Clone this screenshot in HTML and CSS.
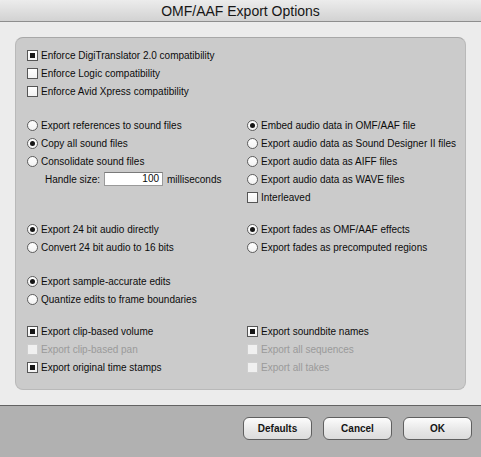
FILE: index.html
```html
<!DOCTYPE html>
<html>
<head>
<meta charset="utf-8">
<link rel="stylesheet" href="styles.css">
</head>
<body>
<div class="titlebar">OMF/AAF Export Options</div>
<div class="content">
  <div class="panel">
    <div class="group">
      <div class="row"><span class="cb on"></span>Enforce DigiTranslator 2.0 compatibility</div>
      <div class="row"><span class="cb"></span>Enforce Logic compatibility</div>
      <div class="row"><span class="cb"></span>Enforce Avid Xpress compatibility</div>
    </div>
    <div class="group grid g16">
      <div class="col">
        <div class="row"><span class="rb"></span>Export references to sound files</div>
        <div class="row"><span class="rb on"></span>Copy all sound files</div>
        <div class="row"><span class="rb"></span>Consolidate sound files</div>
        <div class="row handle">Handle size:<span class="field">100</span><span class="unit">milliseconds</span></div>
      </div>
      <div class="col">
        <div class="row"><span class="rb on"></span>Embed audio data in OMF/AAF file</div>
        <div class="row"><span class="rb"></span>Export audio data as Sound Designer II files</div>
        <div class="row"><span class="rb"></span>Export audio data as AIFF files</div>
        <div class="row"><span class="rb"></span>Export audio data as WAVE files</div>
        <div class="row"><span class="cb"></span>Interleaved</div>
      </div>
    </div>
    <div class="group grid g14">
      <div class="col">
        <div class="row"><span class="rb on"></span>Export 24 bit audio directly</div>
        <div class="row"><span class="rb"></span>Convert 24 bit audio to 16 bits</div>
      </div>
      <div class="col">
        <div class="row"><span class="rb on"></span>Export fades as OMF/AAF effects</div>
        <div class="row"><span class="rb"></span>Export fades as precomputed regions</div>
      </div>
    </div>
    <div class="group g16">
      <div class="row"><span class="rb on"></span>Export sample-accurate edits</div>
      <div class="row"><span class="rb"></span>Quantize edits to frame boundaries</div>
    </div>
    <div class="group grid g14">
      <div class="col">
        <div class="row"><span class="cb on"></span>Export clip-based volume</div>
        <div class="row dis"><span class="cb"></span>Export clip-based pan</div>
        <div class="row"><span class="cb on"></span>Export original time stamps</div>
      </div>
      <div class="col">
        <div class="row"><span class="cb on"></span>Export soundbite names</div>
        <div class="row dis"><span class="cb"></span>Export all sequences</div>
        <div class="row dis"><span class="cb"></span>Export all takes</div>
      </div>
    </div>
  </div>
</div>
<div class="bottombar">
  <button class="btn">Defaults</button>
  <button class="btn">Cancel</button>
  <button class="btn">OK</button>
</div>
</body>
</html>
```
FILE: styles.css
```css
html {
  background: #ececec;
}
body {
  margin: 0;
  width: 481px;
  height: 457px;
  overflow: hidden;
  display: flex;
  flex-direction: column;
  font-family: "Liberation Sans", Arial, sans-serif;
  font-size: 10px;
  color: #0c0c0c;
  background: #ececec;
}
.titlebar {
  height: 21px;
  flex: none;
  border-bottom: 1px solid #8e8e8e;
  background: linear-gradient(#ececec, #d2d2d2);
  display: flex;
  align-items: center;
  justify-content: center;
  font-size: 14px;
  color: #161616;
  border-radius: 4px 4px 0 0;
}
.content {
  flex: 1;
  padding: 15px;
  min-height: 0;
}
.panel {
  box-sizing: border-box;
  height: 100%;
  background: #cbcbcb;
  border: 1px solid #b9b9b9;
  border-top-color: #a8a8a8;
  border-radius: 8px;
  padding: 8px 0 0 11px;
}
.grid {
  display: grid;
  grid-template-columns: 220px 1fr;
}
.g16 { margin-top: 16px; }
.g14 { margin-top: 14px; }
.row {
  height: 18px;
  display: flex;
  align-items: center;
  white-space: nowrap;
}
.row.dis { color: #9a9a9a; }
.cb, .rb {
  flex: none;
  width: 11px;
  height: 11px;
  box-sizing: border-box;
  border: 1px solid #565656;
  background: linear-gradient(#ffffff, #f2f2f2);
  margin-right: 3px;
  display: flex;
  align-items: center;
  justify-content: center;
}
.rb {
  border-radius: 50%;
  border-color: #5e5e5e;
}
.dis .cb {
  border-color: #cfcfcf;
  background: #f0f0f0;
}
.cb.on::after {
  content: "";
  width: 5px;
  height: 5px;
  background: #151515;
}
.rb.on::after {
  content: "";
  width: 5px;
  height: 5px;
  border-radius: 50%;
  background: #151515;
}
.handle {
  padding-left: 18px;
}
.field {
  box-sizing: border-box;
  width: 59px;
  height: 14px;
  margin-left: 4px;
  border: 1px solid #9a9a9a;
  border-top-color: #7a7a7a;
  background: #fff;
  text-align: right;
  padding-right: 3px;
  line-height: 12px;
}
.unit {
  margin-left: 4px;
}
.bottombar {
  flex: none;
  height: 40px;
  border-top: 1px solid #636363;
  background: #b1b1b1;
  display: flex;
  justify-content: flex-end;
  align-items: flex-start;
  gap: 11px;
  padding: 11px 9px 0 0;
  box-sizing: content-box;
}
.btn {
  width: 69px;
  height: 23px;
  box-sizing: border-box;
  border: 1px solid #5f5f5f;
  border-radius: 6px;
  background: linear-gradient(#fcfcfc, #e6e6e6 60%, #dcdcdc);
  font-family: "Liberation Sans", Arial, sans-serif;
  font-weight: bold;
  font-size: 10px;
  color: #151515;
  padding: 0;
}
```
